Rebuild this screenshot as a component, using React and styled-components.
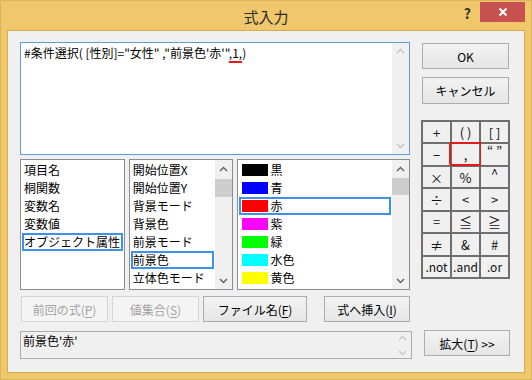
import React from 'react';
import styled, { createGlobalStyle } from 'styled-components';

const FONT = `"Noto Sans CJK JP", "Noto Sans", sans-serif`;

const GlobalStyle = createGlobalStyle`
  html, body { margin: 0; padding: 0; background: #ffffff; }
  * { box-sizing: border-box; }
`;

// 窓枠
const Window = styled.div`
  width: 532px;
  height: 380px;
  background: #f0c86b;
  border: 1px solid #dbb45c;
  padding: 0 6px 6px;
  display: flex;
  flex-direction: column;
  font-family: ${FONT};
  font-size: 12px;
  color: #000;
`;

const TitleBar = styled.div`
  height: 29px;
  display: grid;
  grid-template-columns: 1fr auto 1fr;
`;

const Title = styled.div`
  grid-column: 2;
  font-size: 15px;
  color: #2b2b2b;
  line-height: 20px;
  padding-top: 6px;
`;

const Controls = styled.div`
  grid-column: 3;
  justify-self: end;
  display: flex;
  align-items: flex-start;
  gap: 9px;
  padding-top: 1px;
`;

const Help = styled.div`
  font-size: 14px;
  font-weight: bold;
  color: #333;
  line-height: 14px;
  padding-top: 4px;
`;

const CloseButton = styled.div`
  width: 45px;
  height: 20px;
  background: #c75050;
  display: flex;
  align-items: center;
  justify-content: center;
`;

const Client = styled.div`
  flex: 1;
  background: #f0f0f0;
  border: 1px solid #d4aa52;
  padding: 11px 0 0 12px;
  display: flex;
  flex-direction: column;
`;

const TopSection = styled.div`
  display: flex;
  gap: 11px;
`;

const LeftColumn = styled.div`
  width: 390px;
  display: flex;
  flex-direction: column;
`;

const RightColumn = styled.div`
  width: 89px;
  display: flex;
  flex-direction: column;
`;

const FormulaBox = styled.div`
  height: 113px;
  background: #fff;
  border: 1px solid #5a9ee0;
  display: flex;
`;

const FormulaText = styled.div`
  flex: 1;
  padding: 1px 3px;
  line-height: 17px;
  font-size: 12px;
  white-space: pre;
`;

const Marked = styled.span`
  text-decoration-line: underline;
  text-decoration-color: #e41b1b;
  text-decoration-thickness: 2px;
  text-underline-offset: 3px;
`;

const ScrollBar = styled.div`
  width: 17px;
  background: #f0f0f0;
  display: flex;
  flex-direction: column;
  align-items: center;
  justify-content: ${p => (p.$thumb ? 'flex-start' : 'space-between')};
  padding: ${p => p.$pad || '5px 0'};
`;

const ArrowCell = styled.div`
  width: 17px;
  height: 17px;
  display: flex;
  align-items: center;
  justify-content: center;
`;

const Thumb = styled.div`
  width: 17px;
  height: ${p => p.$h}px;
  background: #cdcdcd;
  margin-top: 1px;
`;

const ListRow = styled.div`
  display: flex;
  margin-top: 4px;
  gap: 4px;
`;

const ListBox = styled.div`
  width: ${p => p.$w}px;
  height: 131px;
  background: #fff;
  border: 1px solid #8a8d93;
  display: flex;
  margin-right: ${p => p.$mr || 0}px;
`;

const ListItems = styled.div`
  flex: 1;
  padding: 1px 1px;
  overflow: hidden;
`;

const Item = styled.div`
  height: 18px;
  border: 2px solid ${p => (p.$selected ? '#3c92e6' : 'transparent')};
  display: flex;
  align-items: center;
  gap: 2px;
  white-space: nowrap;
  line-height: 14px;
`;

const Swatch = styled.div`
  width: 26px;
  height: 12px;
  margin-left: 1px;
  background: ${p => p.$c};
`;

const ButtonRow = styled.div`
  display: flex;
  margin-top: 6px;
  padding-left: 1px;
  gap: 4px;
`;

const Button = styled.div`
  width: ${p => p.$w}px;
  height: ${p => p.$h || 26}px;
  margin-left: ${p => p.$ml || 0}px;
  margin-top: ${p => p.$mt || 0}px;
  border: 1px solid ${p => (p.$disabled ? '#d5d5d5' : '#acacac')};
  background: ${p => (p.$disabled ? '#f4f4f4' : 'linear-gradient(#f2f2f2, #e6e6e6)')};
  color: ${p => (p.$disabled ? '#a3a3a3' : '#000')};
  display: flex;
  align-items: center;
  justify-content: center;
  font-size: 12px;
  white-space: nowrap;
`;

const Key = styled.span`
  text-decoration: underline;
  text-underline-offset: 2px;
`;

const OpGrid = styled.div`
  width: 89px;
  height: 159px;
  margin-top: 16px;
  background: #6f6f6f;
  padding: 2px;
  display: grid;
  grid-template-columns: repeat(3, 1fr);
  grid-template-rows: repeat(7, 1fr);
  gap: 2px;
`;

const OpCell = styled.div`
  position: relative;
  background: #f0f0f0;
  display: flex;
  align-items: center;
  justify-content: center;
  font-size: ${p => p.$fs || 13}px;
  line-height: 1;
  color: #111;
  &::after {
    content: '';
    display: ${p => (p.$marked ? 'block' : 'none')};
    position: absolute;
    inset: -2px -3px -1px -3px;
    border: 2px solid #e41b1b;
    border-radius: 3px;
  }
`;

const Raised = styled.span`
  transform: translateY(${p => p.$dy || -4}px);
`;

const BottomRow = styled.div`
  display: flex;
  margin-top: 8px;
  align-items: flex-start;
`;

const PreviewBox = styled.div`
  width: 392px;
  height: 28px;
  margin-top: 1px;
  border: 1px solid #ababab;
  background: #f0f0f0;
  display: flex;
`;

const PreviewText = styled.div`
  flex: 1;
  padding: 1px 2px;
  line-height: 16px;
`;

const Chevron = ({ up, color = '#606060' }) => (
  <svg width="9" height="6" viewBox="0 0 9 6">
    <polyline
      points={up ? '1,5 4.5,1.5 8,5' : '1,1 4.5,4.5 8,1'}
      fill="none"
      stroke={color}
      strokeWidth="1.4"
    />
  </svg>
);

const ListScroll = ({ top, h }) => (
  <ScrollBar $thumb $pad="0">
    <ArrowCell><Chevron up /></ArrowCell>
    <Thumb $h={h} style={{ marginTop: top }} />
    <div style={{ flex: 1 }} />
    <ArrowCell><Chevron /></ArrowCell>
  </ScrollBar>
);

const fields = ['項目名', '桐関数', '変数名', '変数値', 'オブジェクト属性'];
const attrs = ['開始位置X', '開始位置Y', '背景モード', '背景色', '前景モード', '前景色', '立体色モード'];
const colors = [
  ['#000000', '黒'],
  ['#0000ff', '青'],
  ['#ff0000', '赤'],
  ['#ff00ff', '紫'],
  ['#00ff00', '緑'],
  ['#00ffff', '水色'],
  ['#ffff00', '黄色'],
];

const ops = [
  ['+'], ['( )'], ['[ ]'],
  ['−'], [',', 'mark'], ['“ ”', 'raise'],
  ['×'], ['%'], ['^', 'raise'],
  ['÷'], ['<'], ['>'],
  ['='], ['≦'], ['≧'],
  ['≠'], ['&'], ['#'],
  ['.not'], ['.and'], ['.or'],
];

export default function App() {
  return (
    <>
      <GlobalStyle />
      <Window>
        <TitleBar>
          <Title>式入力</Title>
          <Controls>
            <Help>?</Help>
            <CloseButton>
              <svg width="10" height="10" viewBox="0 0 10 10">
                <path d="M1.5 1.5 L8.5 8.5 M8.5 1.5 L1.5 8.5" stroke="#fff" strokeWidth="2" />
              </svg>
            </CloseButton>
          </Controls>
        </TitleBar>
        <Client>
          <TopSection>
            <LeftColumn>
              <FormulaBox>
                <FormulaText>
                  #条件選択( [性別]="女性" ,"前景色'赤'"<Marked>,1,</Marked>)
                </FormulaText>
                <ScrollBar>
                  <Chevron up color="#c2c2c2" />
                  <Chevron color="#c2c2c2" />
                </ScrollBar>
              </FormulaBox>
              <ListRow>
                <ListBox $w={105}>
                  <ListItems>
                    {fields.map((f, i) => (
                      <Item key={f} $selected={i === 4}>{f}</Item>
                    ))}
                  </ListItems>
                </ListBox>
                <ListBox $w={105}>
                  <ListItems>
                    {attrs.map((a, i) => (
                      <Item key={a} $selected={i === 5}>{a}</Item>
                    ))}
                  </ListItems>
                  <ListScroll top={2} h={18} />
                </ListBox>
                <ListBox $w={173}>
                  <ListItems>
                    {colors.map(([c, n], i) => (
                      <Item key={n} $selected={i === 2}>
                        <Swatch $c={c} />
                        {n}
                      </Item>
                    ))}
                  </ListItems>
                  <ListScroll top={1} h={17} />
                </ListBox>
              </ListRow>
              <ButtonRow>
                <Button $w={87} $disabled>前回の式(<Key>P</Key>)</Button>
                <Button $w={87} $disabled>値集合(<Key>S</Key>)</Button>
                <Button $w={104}>ファイル名(<Key>F</Key>)</Button>
                <Button $w={86} $ml={13}>式へ挿入(<Key>I</Key>)</Button>
              </ButtonRow>
            </LeftColumn>
            <RightColumn>
              <Button $w={87} $ml={1} $mt={1}>OK</Button>
              <Button $w={87} $ml={1} $mt={8} $h={27}>キャンセル</Button>
              <OpGrid>
                {ops.map(([t, kind], i) => (
                  <OpCell key={i} $marked={kind === 'mark'} $fs={t.startsWith('.') ? 12 : 13}>
                    {kind === 'raise' ? <Raised>{t}</Raised> : t}
                  </OpCell>
                ))}
              </OpGrid>
            </RightColumn>
          </TopSection>
          <BottomRow>
            <PreviewBox>
              <PreviewText>前景色'赤'</PreviewText>
              <ScrollBar $pad="3px 0 2px">
                <Chevron up color="#c8c8c8" />
                <Chevron color="#c8c8c8" />
              </ScrollBar>
            </PreviewBox>
            <Button $w={86} $ml={12}>拡大(<Key>T</Key>) &gt;&gt;</Button>
          </BottomRow>
        </Client>
      </Window>
    </>
  );
}
